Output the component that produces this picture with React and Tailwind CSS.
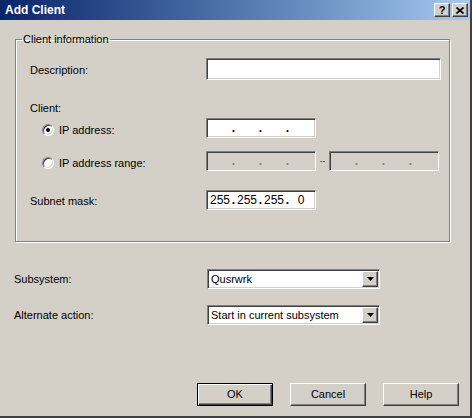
import React from "react";

const raised =
  "border border-t-white border-l-white border-r-[#404040] border-b-[#404040] shadow-[inset_-1px_-1px_0_#808080]";
const sunken =
  "border border-t-[#808080] border-l-[#808080] border-r-white border-b-white shadow-[inset_1px_1px_0_#404040,inset_-1px_-1px_0_#d4d0c8]";

function IpField({ parts = ["", "", "", ""], disabled }) {
  return (
    <div
      className={`${sunken} w-[110px] h-[20px] flex items-center pl-[2px] text-[12px] leading-[14px] ${
        disabled ? "bg-[#d4d0c8] text-[#808080]" : "bg-white text-black"
      }`}
    >
      {parts.map((p, i) => (
        <React.Fragment key={i}>
          <span className="w-[22px] text-center">{p}</span>
          {i < 3 && <span className="w-[5px] text-center font-bold">.</span>}
        </React.Fragment>
      ))}
    </div>
  );
}

function Radio({ checked }) {
  return (
    <div className="w-[12px] h-[12px] rounded-full border border-t-[#808080] border-l-[#808080] border-r-white border-b-white shadow-[inset_1px_1px_0_#404040,inset_-1px_-1px_0_#d4d0c8] bg-white flex items-center justify-center">
      {checked && <div className="w-[4px] h-[4px] rounded-full bg-black" />}
    </div>
  );
}

function Select({ value }) {
  return (
    <div className={`${sunken} w-[173px] h-[20px] bg-white flex items-center pl-[3px] pr-[1px]`}>
      <span className="flex-1 text-[11px] text-black">{value}</span>
      <div className={`${raised} w-[16px] h-[16px] bg-[#d4d0c8] flex items-center justify-center`}>
        <svg width="7" height="4" viewBox="0 0 7 4">
          <path d="M0 0h7L3.5 4z" fill="#000" />
        </svg>
      </div>
    </div>
  );
}

function Button({ children, isDefault }) {
  return (
    <button
      className={`w-[76px] h-[23px] bg-[#d4d0c8] text-[11px] text-black flex items-center justify-center ${
        isDefault
          ? "border border-black shadow-[inset_1px_1px_0_#fff,inset_-1px_-1px_0_#404040,inset_-2px_-2px_0_#808080]"
          : raised
      }`}
    >
      {children}
    </button>
  );
}

export default function App() {
  return (
    <div
      className="w-[472px] h-[418px] bg-[#d4d0c8] flex flex-col border-r-2 border-b-2 border-r-[#404040] border-b-[#404040] text-black"
      style={{ fontFamily: '"Liberation Sans", Arial, sans-serif' }}
    >
      {/* barre de titre */}
      <div className="h-[20px] flex items-center pl-[5px] pr-[2px] bg-linear-to-r from-[#0a246a] to-[#a6caf0]">
        <span className="flex-1 text-white font-bold text-[12px]">Add Client</span>
        <div className={`${raised} w-[16px] h-[14px] bg-[#d4d0c8] flex items-center justify-center text-[11px] font-bold leading-none`}>
          ?
        </div>
        <div className={`${raised} w-[16px] h-[14px] bg-[#d4d0c8] flex items-center justify-center ml-[2px]`}>
          <svg width="8" height="7" viewBox="0 0 8 7">
            <path d="M0.5 0.5L7.5 6.5M7.5 0.5L0.5 6.5" stroke="#000" strokeWidth="1.6" />
          </svg>
        </div>
      </div>

      {/* Client information */}
      <fieldset className="ml-[15px] mt-[12px] w-[435px] h-[210px] border border-[#808080] shadow-[inset_1px_1px_0_#fff,1px_1px_0_#fff] pl-[14px] pr-[8px]">
        <legend className="ml-[-8px] px-[1px] text-[11px] leading-[14px]">Client information</legend>

        <div className="flex items-center mt-[12px] h-[22px]">
          <span className="w-[176px] text-[11px] pt-[3px]">Description:</span>
          <div className={`${sunken} flex-1 h-[22px] bg-white`} />
        </div>

        <div className="flex items-center mt-[20px] h-[16px] text-[11px]">Client:</div>

        <div className="flex items-center mt-[2px] h-[20px]">
          <div className="w-[176px] flex items-center pl-[12px] pt-[4px] gap-[5px]">
            <Radio checked />
            <span className="text-[11px]">IP address:</span>
          </div>
          <IpField />
        </div>

        <div className="flex items-center mt-[13px] h-[20px]">
          <div className="w-[176px] flex items-center pl-[12px] pt-[4px] gap-[5px]">
            <Radio />
            <span className="text-[11px]">IP address range:</span>
          </div>
          <IpField disabled />
          <span className="w-[13px] text-center text-[8px] text-black">--</span>
          <IpField disabled />
        </div>

        <div className="flex items-center mt-[19px] h-[20px]">
          <span className="w-[176px] text-[11px] pt-[3px]">Subnet mask:</span>
          <IpField parts={["255", "255", "255", "0"]} />
        </div>
      </fieldset>

      <div className="flex items-center mt-[27px] ml-[14px] h-[20px]">
        <span className="w-[193px] text-[11px]">Subsystem:</span>
        <Select value="Qusrwrk" />
      </div>

      <div className="flex items-center mt-[16px] ml-[14px] h-[20px]">
        <span className="w-[193px] text-[11px]">Alternate action:</span>
        <Select value="Start in current subsystem" />
      </div>

      <div className="flex justify-end gap-[17px] mt-[58px] pr-[11px]">
        <Button isDefault>OK</Button>
        <Button>Cancel</Button>
        <Button>Help</Button>
      </div>
    </div>
  );
}
